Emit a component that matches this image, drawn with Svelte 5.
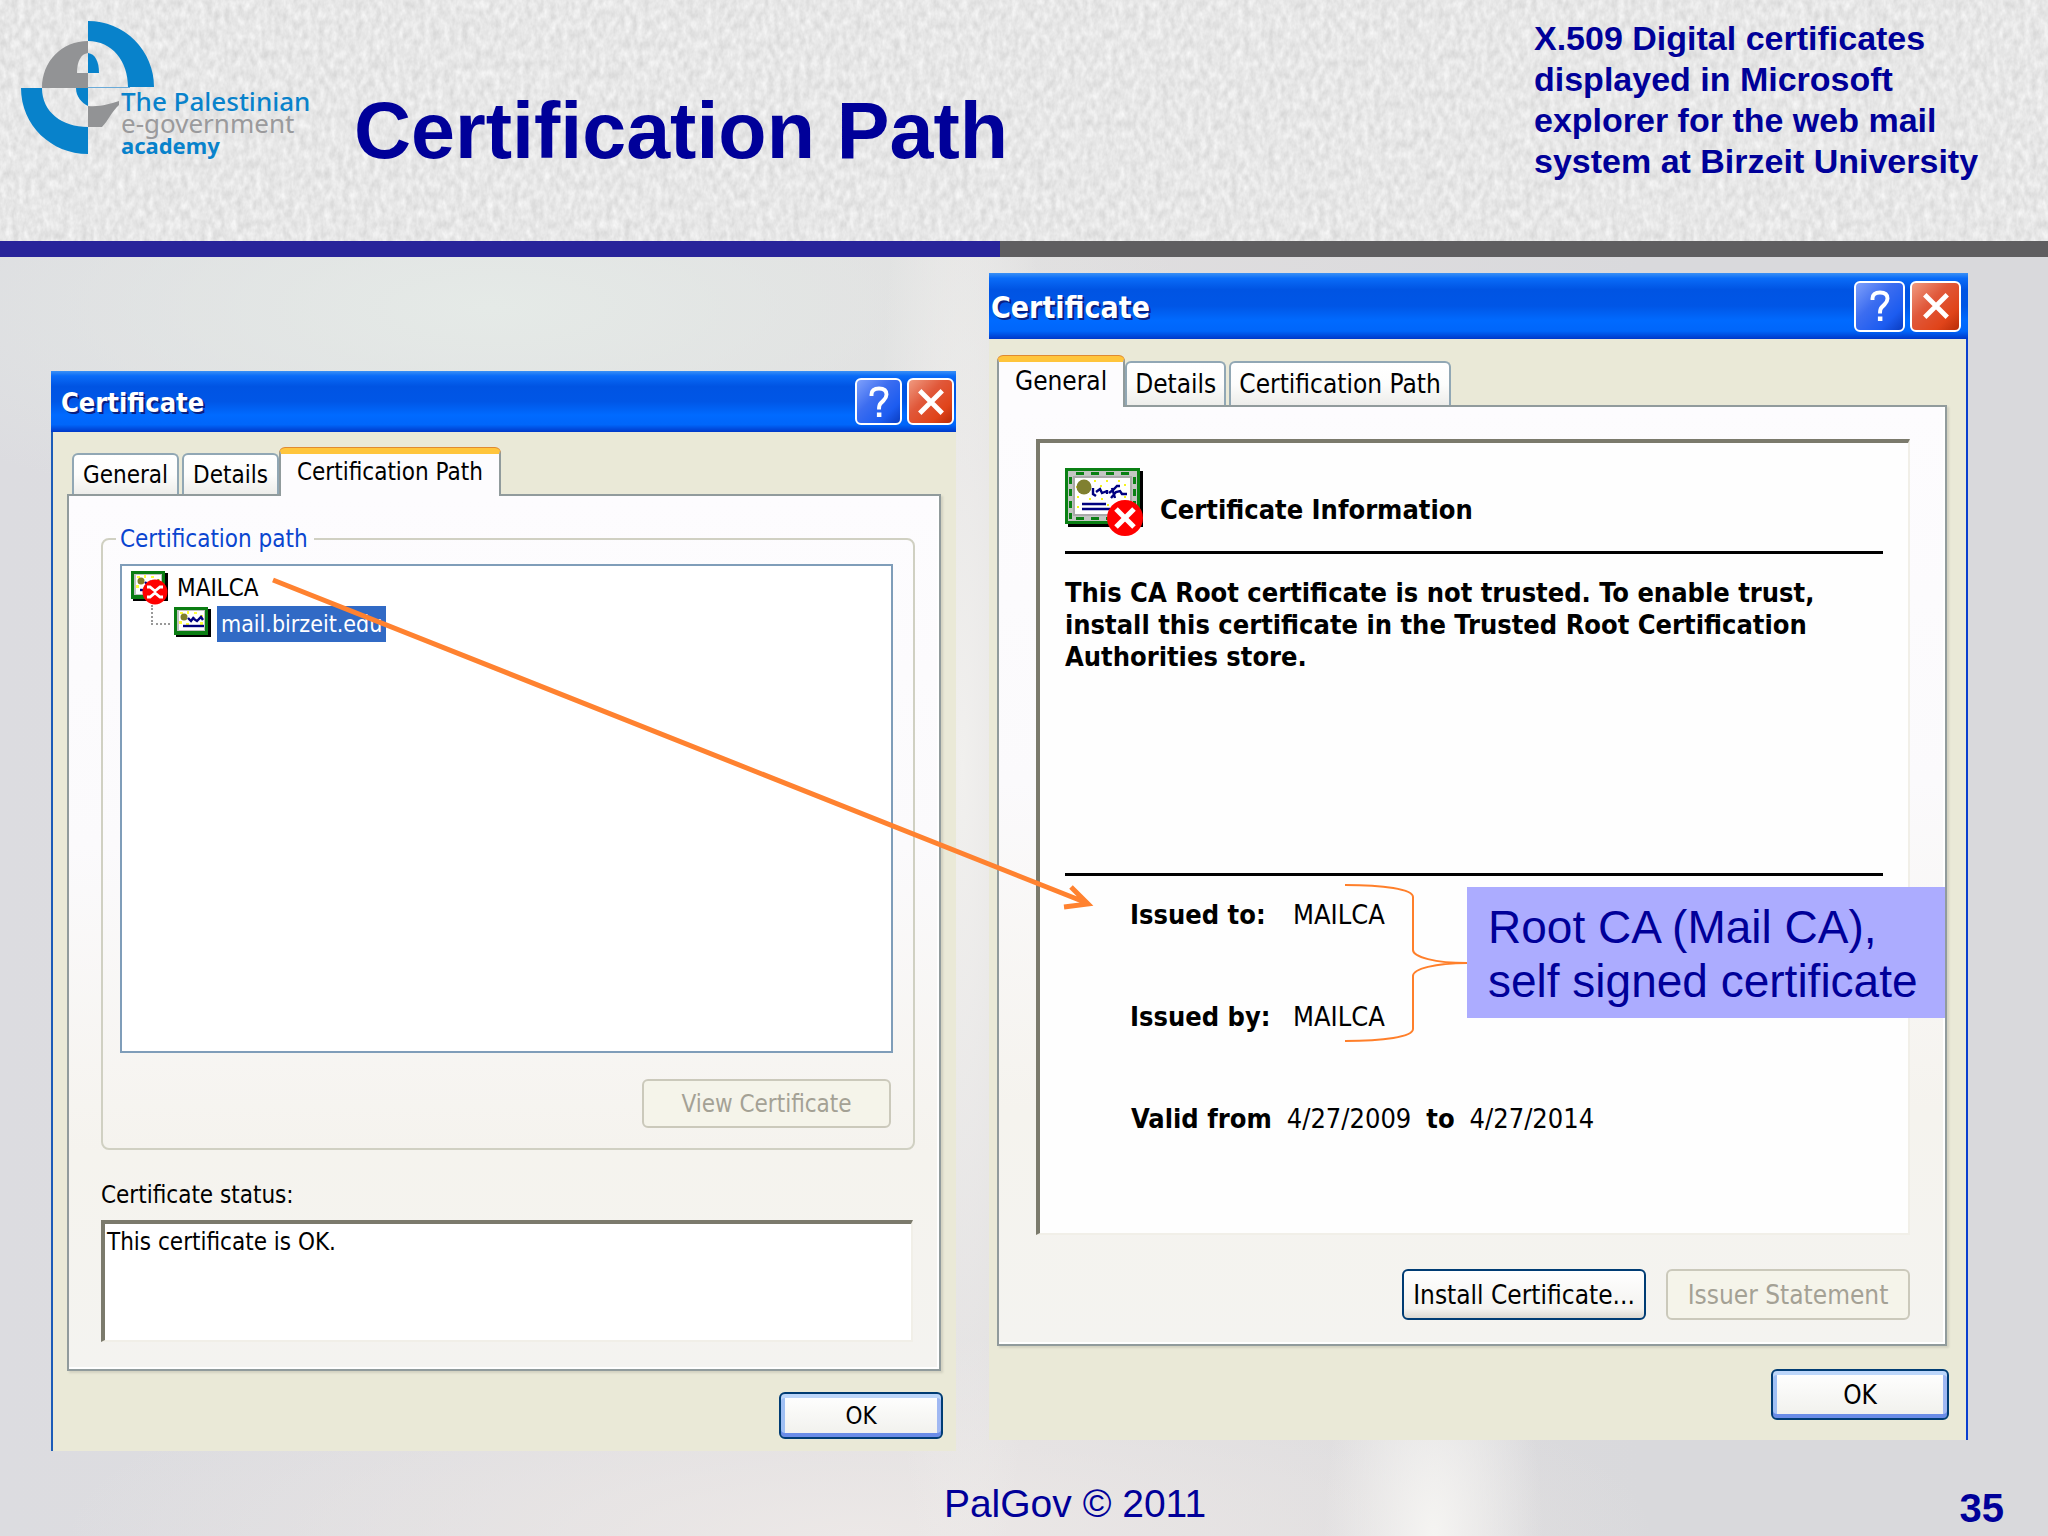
<script lang="ts">
	type Tab = { label: string; selected?: boolean };

	const pathTabs: Tab[] = [
		{ label: 'General' },
		{ label: 'Details' },
		{ label: 'Certification Path', selected: true }
	];
	const generalTabs: Tab[] = [
		{ label: 'General', selected: true },
		{ label: 'Details' },
		{ label: 'Certification Path' }
	];

	const issued = [
		{ term: 'Issued to:', value: 'MAILCA' },
		{ term: 'Issued by:', value: 'MAILCA' }
	];

	let status = $state('This certificate is OK.');
</script>

{#snippet titleBar()}
	<header class="title-bar">
		<h2>Certificate</h2>
		<button type="button" class="caption help" aria-label="Help">
			<svg viewBox="0 0 24 24" aria-hidden="true">
				<path d="M7 8V7q0-4 5-4t5 4q0 2-2 4l-2 2q-1 1-1 4" fill="none" stroke="#fff" stroke-width="2.6" />
				<rect x="10.6" y="19" width="3" height="3" fill="#fff" />
			</svg>
		</button>
		<button type="button" class="caption close" aria-label="Close">
			<svg viewBox="0 0 24 24" aria-hidden="true">
				<path d="M4.500 4.500l15 15M19.500 4.500l-15 15" stroke="#fff" stroke-width="3.200" />
			</svg>
		</button>
	</header>
{/snippet}

{#snippet tabStrip(tabs: Tab[])}
	<div class="tabs" role="tablist">
		{#each tabs as tab}
			<button type="button" role="tab" class="tab" class:selected={tab.selected} aria-selected={!!tab.selected}>
				{tab.label}
			</button>
		{/each}
	</div>
{/snippet}

{#snippet smallCert(revoked: boolean)}
	<svg class="small-cert" viewBox="0 0 37 34" aria-hidden="true">
		<path d="M2 2h35v28H2z" fill="#000" />
		<path d="M0 0h34v28H0z" fill="#0a7d12" />
		<path d="M3 3h28v21H3z" fill="#c0c0c0" />
		<path d="M5 4h25v19H5z" fill="#fff" />
		<path d="M6 5h3v2H6zM13 4h2v3h-2zM20 5h3v2h-3zM26 8h3v2h-3zM5 14h3v3H5zM12 16h3v2h-3zM26 15h3v3h-3z" fill="#ffff3c" />
		<circle cx="10" cy="10" r="3.500" fill="#808028" />
		<path d="M14 11l3 3 3-4M20 12l3 2 4-4 2 3" fill="none" stroke="#000080" stroke-width="2.400" />
		<path d="M9 19h21" stroke="#000080" stroke-width="2.400" />
		{#if revoked}
			<circle cx="24" cy="21" r="12.500" fill="#f00" />
			<path d="M16 16h3l5 4 5-4h3M16 26h3l5-4 5 4h3" fill="none" stroke="#fff" stroke-width="2.800" />
		{/if}
	</svg>
{/snippet}

<div class="slide">
	<header class="masthead">
		<svg class="paper" aria-hidden="true">
			<filter id="grain" x="0" y="0" width="100%" height="100%" color-interpolation-filters="sRGB">
				<feTurbulence type="fractalNoise" baseFrequency="0.16 0.1" numOctaves="3" seed="4" />
				<feColorMatrix values="0.16 0 0 0 0.825  0.16 0 0 0 0.825  0.16 0 0 0 0.825  0 0 0 0 1" />
			</filter>
			<rect width="100%" height="100%" filter="url(#grain)" />
		</svg>
		<div class="brand">
			<svg class="mark" viewBox="0 0 134 134" aria-hidden="true">
				<path d="M67 0a66 66 0 0 1 66 66h-26c0-26-16-46-40-46z" fill="#0882cb" />
				<path d="M0 67h21c0 24 20 39 46 39v27C30 133 0 104 0 67z" fill="#0882cb" />
				<path d="M67 20v12c-7 1-11 8-11 20h11v15H21c0-27 20-47 46-47z" fill="#929395" />
				<path d="M67 32c7 1 11 8 11 20H67z" fill="#0882cb" />
				<path d="M55 67h12v18c-6-3-12-9-12-18z" fill="#0882cb" />
				<path d="M67 85c13 1 21-2 31-5v4c-7 6-11 16-17 22H67z" fill="#929395" />
				<path d="M67 66.500h42" stroke="#6aaad8" stroke-width="1" />
			</svg>
			<p class="brand-name">
				<span>The Palestinian</span>
				<span class="thin">e-government</span>
				<span class="strong">academy</span>
			</p>
		</div>
		<h1>Certification Path</h1>
		<p class="summary">X.509 Digital certificates displayed in Microsoft explorer for the web mail system at Birzeit University</p>
	</header>
	<div class="rule"></div>

	<main>
		<section class="window path-window" aria-label="Certification path">
			{@render titleBar()}
			<div class="window-body">
				{@render tabStrip(pathTabs)}
				<div class="page">
					<fieldset>
						<legend>Certification path</legend>
						<ul class="tree">
							<li>{@render smallCert(true)}<span>MAILCA</span></li>
							<li class="child">{@render smallCert(false)}<span class="picked">mail.birzeit.edu</span></li>
						</ul>
						<button type="button" class="push view" disabled>View Certificate</button>
					</fieldset>
					<label for="status">Certificate status:</label>
					<textarea id="status" bind:value={status} readonly></textarea>
				</div>
				<button type="button" class="push default">OK</button>
			</div>
		</section>

		<section class="window general-window" aria-label="General">
			{@render titleBar()}
			<div class="window-body">
				{@render tabStrip(generalTabs)}
				<div class="page">
					<div class="info">
						<div class="info-head">
							<svg class="big-cert" viewBox="0 0 78 69" aria-hidden="true">
								<path d="M3 3h75v56H3z" fill="#000" />
								<path d="M0 0h75v56H0z" fill="#0a8014" />
								<path d="M3 3h69v50H3z" fill="#c3c6c3" />
								<path d="M5 5.500h66M5 50.500h66" stroke="#0a8014" stroke-width="3" stroke-dasharray="8 7" stroke-dashoffset="-6" />
								<path d="M5.500 9v42M69.500 9v42" stroke="#0a8014" stroke-width="3" stroke-dasharray="7 5" />
								<path d="M8 8h59v40H8z" fill="#aaa" />
								<path d="M10 10h55v36H10z" fill="#fff" />
								<path d="M29 12h2v2h-2zM41 12h2v2h-2zM53 12h2v2h-2zM11 18h2v2h-2zM35 17h2v2h-2zM59 16h2v2h-2zM12 28h2v2h-2zM24 30h2v2h-2zM36 30h2v2h-2zM59 28h2v2h-2zM12 38h2v2h-2zM42 36h2v2h-2z" fill="#f4f41e" />
								<circle cx="19" cy="19" r="7.500" fill="#808030" />
								<path d="M28 20v6l3 2M31 24l4-3 2 4 5-2M42 22v4M44 25l4-3 4-4h3M47 20l3 10M46 30l5-6 4-1 2 3 5 0" fill="none" stroke="#000080" stroke-width="2.400" />
								<path d="M17 36h24M17 41h28" stroke="#000080" stroke-width="2.600" />
								<circle cx="60" cy="50" r="18" fill="#f00" />
								<path d="M51 41l18 18M69 41L51 59" stroke="#fff" stroke-width="5" />
							</svg>
							<h3>Certificate Information</h3>
						</div>
						<p class="message">This CA Root certificate is not trusted. To enable trust, install this certificate in the Trusted Root Certification Authorities store.</p>
						<dl>
							{#each issued as row}
								<div>
									<dt>{row.term}</dt>
									<dd>{row.value}</dd>
								</div>
							{/each}
						</dl>
						<p class="validity"><b>Valid from</b> <span>4/27/2009</span> <b>to</b> <span>4/27/2014</span></p>
					</div>
					<div class="actions">
						<button type="button" class="push install">Install Certificate...</button>
						<button type="button" class="push" disabled>Issuer Statement</button>
					</div>
					<svg class="brace" viewBox="0 0 122 158" aria-hidden="true">
						<path d="M0 1C38 1 68 5 68 13V66c0 7 22 13 54 13-32 0-54 6-54 13v53c0 8-30 12-68 12" fill="none" stroke="#ff7f2a" stroke-width="2" />
					</svg>
					<p class="callout">Root CA (Mail CA),<br />self signed certificate</p>
				</div>
				<button type="button" class="push default">OK</button>
			</div>
		</section>

		<svg class="arrow" viewBox="0 0 2048 1194" preserveAspectRatio="none" aria-hidden="true">
			<path d="M273 323L1087 646M1071 630l17 17-24 3" fill="none" stroke="#ff8230" stroke-width="5" />
		</svg>
	</main>

	<footer>
		<span></span>
		<span>PalGov © 2011</span>
		<b>35</b>
	</footer>
</div>

<style>
	:global(body) {
		margin: 0;
	}

	.slide {
		min-height: 100vh;
		display: flex;
		flex-direction: column;
		font-family: 'Liberation Sans', Arial, sans-serif;
		color: #000099;
		background:
			radial-gradient(ellipse 110px 260px at 70% 100%, #f5f4f2, transparent),
			radial-gradient(ellipse 90px 900px at 47% 50%, #f1f0ee, transparent),
			radial-gradient(ellipse 700px 220px at 24% 20%, #e5eae7, transparent),
			radial-gradient(ellipse 800px 200px at 42% 100%, #ece8e7, transparent),
			linear-gradient(90deg, #dcdce0, #e0dedf 50%, #d9d9dc 80%);
	}

	.masthead {
		position: relative;
		height: 241px;
		display: grid;
		grid-template-columns: 354px 1fr 514px;
		background: #e6e6e6;
	}

	.masthead > * {
		position: relative;
	}

	.masthead .paper {
		position: absolute;
		inset: 0;
		width: 100%;
		height: 100%;
	}

	.brand {
		display: flex;
		padding: 21px 0 0 21px;
	}

	.mark {
		flex: none;
		width: 134px;
		height: 134px;
	}

	.brand-name {
		margin: 69px 0 0 -34px;
		display: flex;
		flex-direction: column;
		font: 500 26px/22px 'Noto Sans', sans-serif;
		white-space: nowrap;
		color: #0882cb;
	}

	.brand-name .thin {
		font-weight: 400;
		color: #9a9a9c;
	}

	.brand-name .strong {
		font-weight: 700;
		font-size: 22px;
	}

	h1 {
		margin: 85px 0 0;
		font-size: 79px;
		line-height: 92px;
	}

	.summary {
		margin: 18px 0 0;
		padding-right: 50px;
		font-weight: bold;
		font-size: 34px;
		line-height: 41px;
	}

	.rule {
		height: 16px;
		background: linear-gradient(90deg, #28249a 1000px, #5f5e60 1000px);
	}

	main {
		position: relative;
		display: grid;
		grid-template-columns: 905fr 979fr;
		gap: 33px;
		align-items: start;
		padding: 0 80px 0 51px;
	}

	.window {
		color: #000;
		font-family: 'DejaVu Sans Condensed', 'Noto Sans', sans-serif;
		background: #eae9d7;
	}

	.path-window {
		margin-top: 114px;
		font-size: 24px;
		line-height: 30px;
	}

	.general-window {
		margin-top: 16px;
		font-size: 26px;
		line-height: 32px;
	}

	.path-window .window-body {
		border-left: 2px solid #1c5cb8;
		padding: 16px 15px 12px 14px;
	}

	.general-window .window-body {
		border-right: 2px solid #0a3fd0;
		padding: 17px 19px 20px 8px;
	}

	.title-bar {
		box-sizing: border-box;
		height: 61px;
		display: flex;
		align-items: center;
		gap: 5px;
		padding: 0 2px 0 10px;
		background: linear-gradient(#3a90f5, #0a6cf8 8%, #0054e3 25%, #0056e6 50%, #006aff 72%, #0066fa 88%, #0038c8);
	}

	.general-window .title-bar {
		height: 66px;
		padding: 0 7px 0 2px;
	}

	h2 {
		flex: 1;
		margin: 0;
		padding-top: 3px;
		color: #fff;
		font-size: 27px;
		text-shadow: 2px 2px 0 #0a1f80;
	}

	.general-window h2 {
		font-size: 30px;
	}

	button,
	textarea {
		box-sizing: border-box;
		margin: 0;
		font: inherit;
		color: inherit;
	}

	.caption {
		width: 47px;
		height: 47px;
		display: grid;
		place-items: center;
		padding: 0;
		border: 2px solid #fff;
		border-radius: 6px;
	}

	.general-window .caption {
		width: 51px;
		height: 51px;
	}

	.caption svg {
		width: 36px;
		height: 36px;
	}

	.help {
		background: linear-gradient(135deg, #7fa0fb, #3c6df0 40%, #1c5cf0 75%, #0a3cc0);
	}

	.close {
		background: linear-gradient(135deg, #f09a80, #e0583a 40%, #e0441a 75%, #b82c08);
	}

	.tabs {
		position: relative;
		z-index: 1;
		display: flex;
		align-items: flex-end;
		margin-bottom: -2px;
	}

	.path-window .tabs {
		padding-left: 5px;
	}

	.tab {
		height: 41px;
		margin: 0 3px 2px 0;
		padding: 0 9px;
		border: 2px solid #91a7b4;
		border-bottom: 0;
		border-radius: 6px 6px 0 0;
		background: linear-gradient(#fff, #fdfdfc 50%, #ededea);
		white-space: nowrap;
	}

	.general-window .tab {
		height: 44px;
		padding: 0 8px;
	}

	.tab:has(+ .selected) {
		margin-right: 0;
	}

	.tab.selected {
		height: 48px;
		margin: 0;
		padding: 0 16px 7px;
		border-color: #919b9c;
		border-top: 6px solid #ffc53c;
		background: #fdfcfe;
		box-shadow: 0 -1px 0 #e08a30;
	}

	.general-window .tab.selected {
		height: 51px;
		padding: 0 16px 7px;
	}

	.page {
		position: relative;
		border: 2px solid #919b9c;
		background: linear-gradient(#fdfcfe, #fbfafc 40%, #f5f3ee 75%, #f4f3f0);
		box-shadow: inset -2px -2px 0 #fff, 2px 2px 2px #d2d1c0;
	}

	.path-window .page {
		padding: 29px 24px 27px 32px;
	}

	.general-window .page {
		padding: 32px 35px 24px 37px;
	}

	fieldset {
		margin: 0;
		padding: 11px 20px 20px 17px;
		border: 2px solid #d0d0c2;
		border-radius: 8px;
		display: flow-root;
	}

	legend {
		margin-left: -4px;
		padding: 0 6px 0 4px;
		line-height: 28px;
		color: #0a45d0;
	}

	.tree {
		box-sizing: border-box;
		height: 489px;
		margin: 0;
		padding: 4px 9px;
		border: 2px solid #7f9db9;
		background: #fff;
		list-style: none;
	}

	.tree li {
		display: flex;
		align-items: center;
		gap: 9px;
		height: 36px;
	}

	.tree .child {
		gap: 6px;
	}

	.tree .child::before {
		content: '';
		width: 17px;
		height: 18px;
		margin: 0 -2px 18px 20px;
		border: dotted #999;
		border-width: 0 0 2px 2px;
	}

	.small-cert {
		flex: none;
		width: 37px;
		height: 34px;
	}

	.picked {
		padding: 3px 4px;
		color: #fff;
		background: #316ac5;
		font-size: 23px;
	}

	.push {
		height: 51px;
		padding: 0;
		border: 2px solid #003c74;
		border-radius: 6px;
		background: linear-gradient(#fff, #f4f3f0 80%, #dcd8d2);
		white-space: nowrap;
	}

	.path-window .push {
		height: 49px;
	}

	.push:disabled {
		border-color: #cbc9bb;
		background: #f5f4ea;
		color: #a4a195;
	}

	.view {
		display: block;
		width: 249px;
		margin: 26px 2px 0 auto;
	}

	.push.default {
		display: block;
		width: 178px;
		margin: 23px -2px 0 auto;
		box-shadow: inset 0 4px 0 #bcd6fa, inset 0 -4px 0 #6a8ce8, inset 4px 0 0 #a0c0f4, inset -4px 0 0 #a0b8f2;
		background: linear-gradient(#fff, #f0f0ec);
	}

	.path-window .push.default {
		width: 164px;
		height: 47px;
		margin-top: 21px;
	}

	label {
		display: block;
		margin: 30px 0 10px;
	}

	textarea {
		display: block;
		width: calc(100% - 2px);
		height: 122px;
		padding: 3px 2px;
		resize: none;
		outline: none;
		border: 4px solid #7b7a6c;
		border-right: 2px solid #f1efe8;
		border-bottom: 2px solid #f1efe8;
		background: #fff;
	}

	.info {
		box-sizing: border-box;
		height: 796px;
		padding: 25px 25px 0;
		border: 4px solid #7b7a6c;
		border-right: 2px solid #f1efe8;
		border-bottom: 2px solid #f1efe8;
		background: #fefefe;
		font-size: 27px;
	}

	.info-head {
		display: flex;
		align-items: flex-end;
		gap: 17px;
		padding-bottom: 14px;
		border-bottom: 3px solid #000;
	}

	.big-cert {
		width: 78px;
		height: 69px;
	}

	h3 {
		margin: 0 0 11px;
		font-size: inherit;
	}

	.message {
		height: 296px;
		margin: 0;
		padding-top: 23px;
		border-bottom: 3px solid #000;
		font-weight: bold;
	}

	dl {
		margin: 23px 0 0 65px;
	}

	dl div {
		display: flex;
		margin-bottom: 70px;
	}

	dt {
		width: 163px;
		font-weight: bold;
	}

	dd {
		margin: 0;
	}

	.validity {
		display: flex;
		gap: 15px;
		margin: 0 0 0 66px;
	}

	.actions {
		display: flex;
		justify-content: flex-end;
		gap: 20px;
		margin-top: 34px;
	}

	.actions .push {
		width: 244px;
	}

	.brace {
		position: absolute;
		top: 477px;
		right: 478px;
		width: 122px;
		height: 158px;
	}

	.callout {
		position: absolute;
		top: 480px;
		right: 0;
		box-sizing: border-box;
		width: 478px;
		margin: 0;
		padding: 13px 0 10px 21px;
		background: #acacff;
		color: #000099;
		font: 46px/54px 'Liberation Sans', Arial, sans-serif;
		white-space: nowrap;
	}

	.arrow {
		position: absolute;
		inset: 0;
		width: 100%;
		height: 100%;
		pointer-events: none;
	}

	footer {
		display: grid;
		grid-template-columns: 1fr auto 1fr;
		align-items: start;
		padding: 30px 44px 0 146px;
		font-size: 39px;
		line-height: 46px;
	}

	footer b {
		font-size: 40px;
		line-height: 54px;
		text-align: right;
	}
</style>
